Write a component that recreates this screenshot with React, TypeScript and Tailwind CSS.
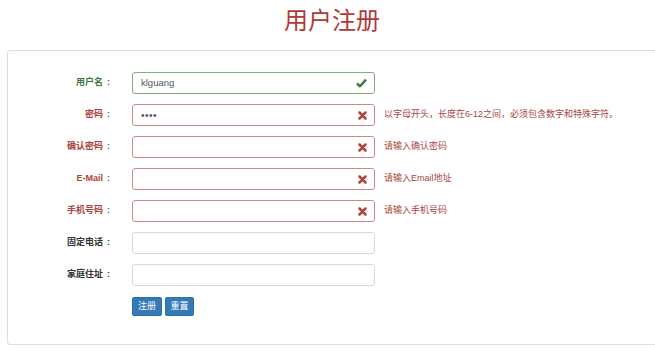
import React from 'react';

type Status = 'success' | 'error' | 'none';

interface Field {
    label: string;
    value?: string;
    password?: boolean;
    status: Status;
    hint?: string;
}

const fields: Field[] = [
    { label: '用户名', value: 'klguang', status: 'success' },
    { label: '密码', value: '••••', password: true, status: 'error', hint: '以字母开头，长度在6-12之间，必须包含数字和特殊字符。' },
    { label: '确认密码', status: 'error', hint: '请输入确认密码' },
    { label: 'E-Mail', status: 'error', hint: '请输入Email地址' },
    { label: '手机号码', status: 'error', hint: '请输入手机号码' },
    { label: '固定电话', status: 'none' },
    { label: '家庭住址', status: 'none' },
];

const font = { fontFamily: '"Liberation Sans", "Noto Sans CJK SC", sans-serif' };

function CheckIcon() {
    return (
        <svg width="11" height="10" viewBox="0 0 11 10">
            <path d="M1 5.5 L4 8.3 L10 1.6" fill="none" stroke="#3c763d" strokeWidth="2.4" strokeLinejoin="round" />
        </svg>
    );
}

function CrossIcon() {
    return (
        <svg width="9" height="9" viewBox="0 0 9 9">
            <path d="M1.5 1.5 L7.5 7.5 M7.5 1.5 L1.5 7.5" fill="none" stroke="#a94442" strokeWidth="2.5" strokeLinecap="round" />
        </svg>
    );
}

function FormRow({ field }: { field: Field }) {
    const labelColor =
        field.status === 'success' ? 'text-[#3c763d]' : field.status === 'error' ? 'text-[#a94442]' : 'text-[#333333]';
    const borderColor =
        field.status === 'success' ? 'border-[#7fae7f]' : field.status === 'error' ? 'border-[#d28a88]' : 'border-[#d9d9d9]';

    return (
        <div className="flex items-center h-[22px]">
            <div className={`w-[102px] text-right text-[9px] font-bold ${labelColor}`}>
                {field.label}
                <span className="ml-[4px]">:</span>
            </div>
            <div
                className={`ml-[22px] w-[243px] h-[22px] flex items-center justify-between border rounded-[3px] bg-white pl-[8px] pr-[7px] ${borderColor}`}
            >
                <span className={field.password ? 'text-[10px] tracking-[0.5px] text-[#555]' : 'text-[9.5px] text-[#555]'}>
                    {field.value}
                </span>
                {field.status === 'success' && <CheckIcon />}
                {field.status === 'error' && <CrossIcon />}
            </div>
            {field.hint && <div className="ml-[9px] text-[9px] text-[#a94442] whitespace-nowrap">{field.hint}</div>}
        </div>
    );
}

export default function App() {
    return (
        <div className="w-[655px] h-[351px] bg-white overflow-hidden" style={font}>
            <div className="ml-[7px] w-[650px] pt-[5px] h-[50px] text-center text-[24px] leading-[32px] text-[#b03a37]">
                用户注册
            </div>
            <div className="ml-[7px] w-[650px] h-[295px] border border-[#dddddd] rounded-[3px] pt-[21px]">
                <div className="flex flex-col gap-[10px]">
                    {fields.map((f) => (
                        <FormRow key={f.label} field={f} />
                    ))}
                    <div className="flex gap-[3px] pl-[124px] pt-[1px]">
                        <button className="w-[30px] h-[19px] bg-[#337ab7] border border-[#2e6da4] rounded-[2px] text-white text-[9px] leading-none">
                            注册
                        </button>
                        <button className="w-[29px] h-[19px] bg-[#337ab7] border border-[#2e6da4] rounded-[2px] text-white text-[9px] leading-none">
                            重置
                        </button>
                    </div>
                </div>
            </div>
        </div>
    );
}
